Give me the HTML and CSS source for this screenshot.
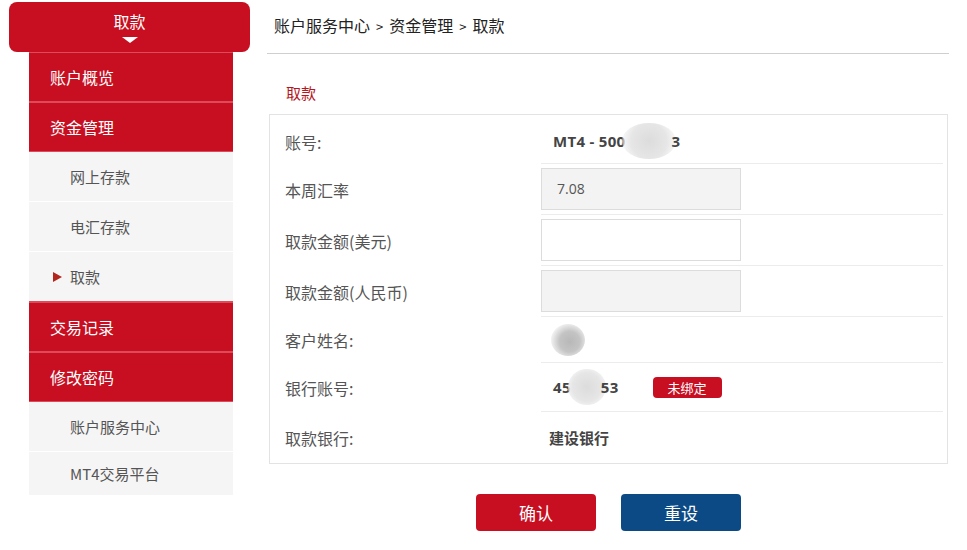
FILE: index.html
```html
<!DOCTYPE html>
<html lang="zh-CN">
<head>
<meta charset="utf-8">
<title>取款</title>
<link rel="stylesheet" href="styles.css">
</head>
<body>
<div class="page">
  <aside class="sidebar">
    <div class="tab">
      <span class="tab-title">取款</span>
      <span class="tab-arrow"></span>
    </div>
    <nav class="menu">
      <a class="menu-main">账户概览</a>
      <a class="menu-main">资金管理</a>
      <a class="menu-sub">网上存款</a>
      <a class="menu-sub">电汇存款</a>
      <a class="menu-sub active"><span class="tri"></span>取款</a>
      <a class="menu-main">交易记录</a>
      <a class="menu-main">修改密码</a>
      <a class="menu-sub">账户服务中心</a>
      <a class="menu-sub last">MT4交易平台</a>
    </nav>
  </aside>
  <main class="content">
    <div class="breadcrumb">账户服务中心<span class="sep">&gt;</span>资金管理<span class="sep">&gt;</span>取款</div>
    <h2 class="title">取款</h2>
    <div class="form-box">
      <div class="row r1">
        <div class="label">账号:</div>
        <div class="value"><b class="strong">MT4 - 500<span class="blur b1"></span>3</b></div>
      </div>
      <div class="row r2">
        <div class="label">本周汇率</div>
        <div class="value"><div class="input readonly">7.08</div></div>
      </div>
      <div class="row r2">
        <div class="label">取款金额(美元)</div>
        <div class="value"><div class="input"></div></div>
      </div>
      <div class="row r2">
        <div class="label">取款金额(人民币)</div>
        <div class="value"><div class="input readonly"></div></div>
      </div>
      <div class="row r5">
        <div class="label">客户姓名:</div>
        <div class="value"><span class="blur b2"></span></div>
      </div>
      <div class="row r6">
        <div class="label">银行账号:</div>
        <div class="value"><b class="strong">45<span class="blur b3"></span>53</b><span class="badge">未绑定</span></div>
      </div>
      <div class="row r7 last">
        <div class="label">取款银行:</div>
        <div class="value"><b class="bank">建设银行</b></div>
      </div>
    </div>
    <div class="actions">
      <button class="btn btn-red">确认</button>
      <button class="btn btn-blue">重设</button>
    </div>
  </main>
</div>
</body>
</html>
```

FILE: styles.css
```css
* { box-sizing: border-box; }
html, body { margin: 0; padding: 0; background: #fff; }
body {
  font-family: "Noto Sans CJK SC", "Open Sans", sans-serif;
  color: #555;
}
.page {
  display: flex;
  align-items: flex-start;
}
.sidebar {
  width: 250px;
  padding-left: 9px;
  padding-top: 2px;
  flex: none;
}
.tab {
  height: 50px;
  background: #c70f21;
  border-radius: 8px;
  display: flex;
  flex-direction: column;
  align-items: center;
  padding-top: 9px;
  position: relative;
  z-index: 1;
}
.tab-title {
  color: #fff;
  font-size: 16px;
  line-height: 20px;
}
.tab-arrow {
  width: 0;
  height: 0;
  border-left: 8px solid transparent;
  border-right: 8px solid transparent;
  border-top: 6px solid #fff;
  margin-top: 6px;
}
.menu {
  margin-left: 20px;
  width: 204px;
  display: flex;
  flex-direction: column;
}
.menu a {
  display: flex;
  align-items: center;
  height: 50px;
  text-decoration: none;
}
.menu-main {
  background: #c70f21;
  color: #fff;
  font-size: 16px;
  padding-left: 21px;
  border-top: 2px solid #dd4a58;
}
.menu-main:first-child { border-top: 1px solid #dd4a58; height: 49px !important; }
.menu-sub {
  background: #f5f5f6;
  color: #555;
  font-size: 15px;
  padding-left: 41px;
  border-top: 1px solid #fff;
}
.menu-main + .menu-sub { border-top: 1px solid #dd4a58; }
.menu-sub.last { height: 44px; }
.menu-sub .tri {
  width: 0;
  height: 0;
  border-top: 5px solid transparent;
  border-bottom: 5px solid transparent;
  border-left: 9px solid #b3261e;
  margin-left: -17px;
  margin-right: 8px;
}
.content {
  margin-left: 17px;
  width: 682px;
  flex: none;
}
.breadcrumb {
  height: 54px;
  border-bottom: 1px solid #cfcfcf;
  padding: 14px 0 0 7px;
  font-size: 16px;
  line-height: 22px;
  color: #222;
}
.sep {
  font-size: 13px;
  margin: 0 6px;
}
.title {
  margin: 0;
  font-weight: normal;
  font-size: 15px;
  line-height: 20px;
  color: #b5151c;
  padding: 29px 0 11px 19px;
}
.form-box {
  margin: 0 1px 0 2px;
  border: 1px solid #e3e3e3;
}
.row {
  display: flex;
  height: 49px;
}
.row.r2 { height: 51px; }
.row.r5 { height: 46px; }
.row.r6 { height: 49px; }
.row.r7 { height: 51px; }
.label {
  width: 271px;
  flex: none;
  padding-left: 15px;
  display: flex;
  align-items: center;
  font-size: 16px;
  color: #555;
}
.value {
  flex: 1;
  margin-right: 4px;
  border-bottom: 1px solid #ececec;
  display: flex;
  align-items: center;
}
.row.last .value { border-bottom: none; }
.row.r1 .label, .row.r1 .value { padding-top: 4px; }
.strong {
  font-family: "Open Sans", "Noto Sans CJK SC", sans-serif;
  font-weight: 700;
  font-size: 15px;
  color: #444;
  margin-left: 12px;
  display: inline-flex;
  align-items: center;
  letter-spacing: 0.3px;
}
.bank {
  font-weight: 700;
  font-size: 15px;
  color: #444;
  margin-left: 8px;
}
.blur {
  display: inline-block;
  border-radius: 50%;
  background: radial-gradient(circle, #dcdcdc 0%, #e6e6e6 55%, rgba(240,240,240,0.6) 80%, rgba(255,255,255,0) 100%);
}
.b1 { width: 54px; height: 36px; margin: -8px -5px -8px -3px; }
.b2 { width: 34px; height: 32px; margin-left: 10px; background: radial-gradient(circle at 55% 55%, #b8b8b8 0%, #c4c4c4 40%, #eeeeee 70%, rgba(255,255,255,0) 100%); }
.b3 { width: 38px; height: 36px; margin: -8px -5px -8px -3px; }
.badge {
  margin-left: 34px;
  width: 69px;
  height: 21px;
  border-radius: 4px;
  background: #c80f22;
  color: #fff;
  font-size: 13px;
  line-height: 21px;
  text-align: center;
}
.input {
  width: 200px;
  height: 42px;
  border: 1px solid #dcdcdc;
  background: #fff;
  font-family: "Open Sans", "Noto Sans CJK SC", sans-serif;
  font-size: 14px;
  color: #555;
  padding-left: 15px;
  line-height: 40px;
}
.input.readonly { background: #f3f3f3; }
.actions {
  display: flex;
  justify-content: center;
  gap: 25px;
  margin-top: 30px;
  padding-left: 1px;
}
.btn {
  width: 120px;
  height: 37px;
  border: none;
  border-radius: 4px;
  color: #fff;
  font-family: "Noto Sans CJK SC", sans-serif;
  font-size: 17px;
  cursor: pointer;
}
.btn-red { background: #c80f22; }
.btn-blue { background: #0c4a86; }
```
